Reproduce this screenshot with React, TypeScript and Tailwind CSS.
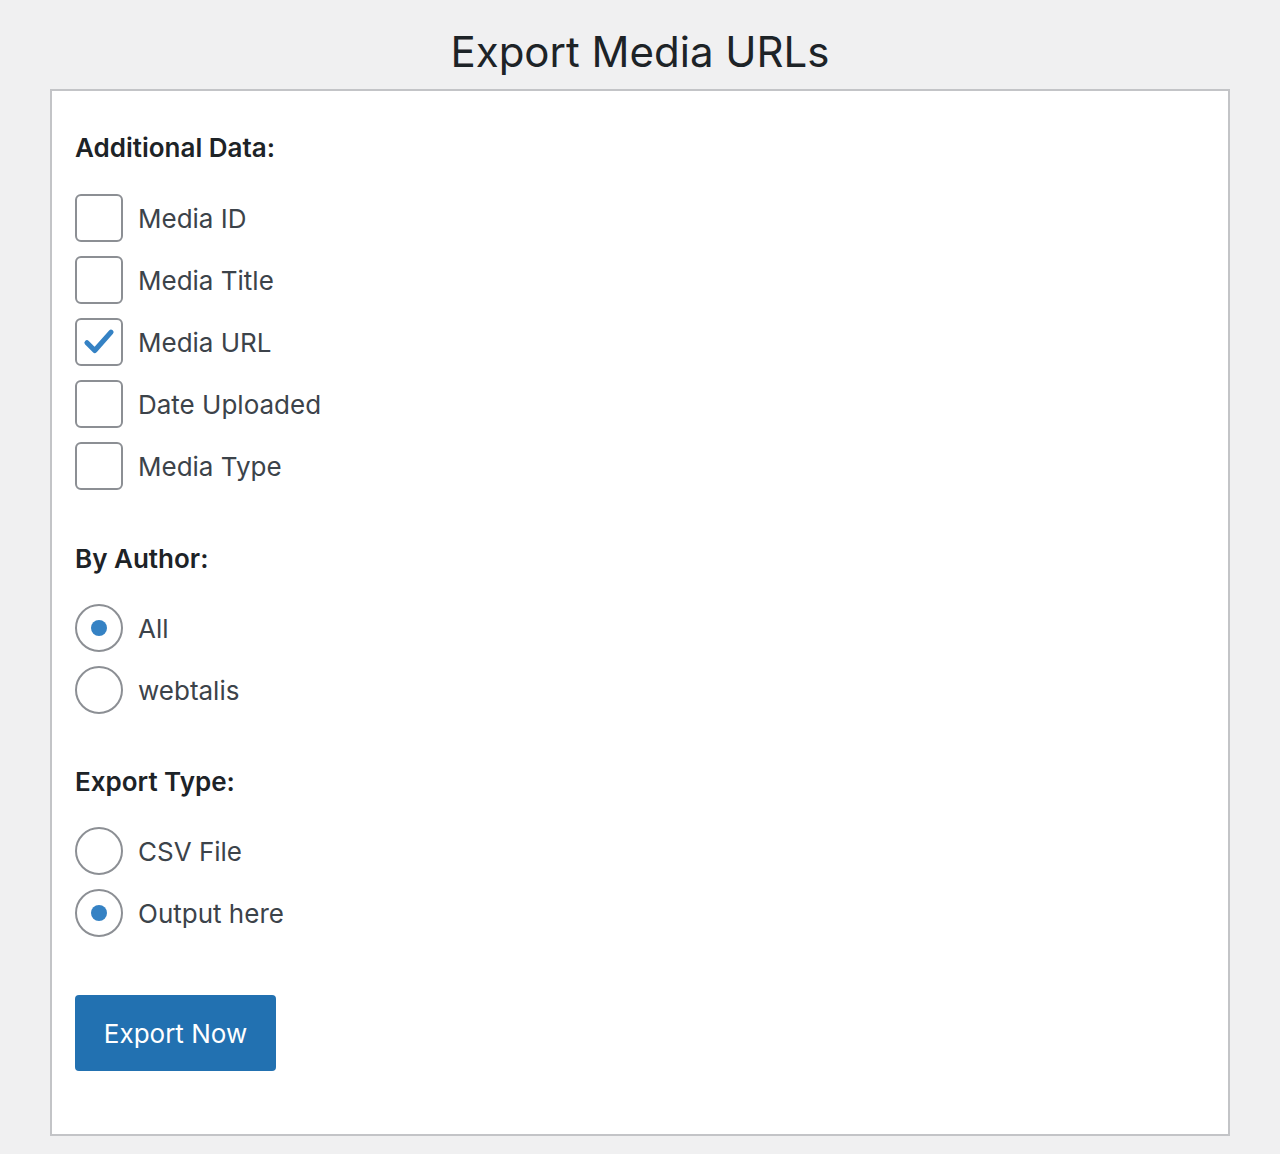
import React from "react";

const F = { fontFamily: "Inter, 'Noto Sans', sans-serif" };

function Check({ checked, label }: { checked?: boolean; label: string }) {
  return (
    <div className="flex items-center h-[48px]">
      <div className="w-[48px] h-[48px] rounded-[6px] border-2 border-[#8c8f94] bg-white flex items-center justify-center">
        {checked && (
          <svg width="34" height="34" viewBox="0 0 24 24">
            <path d="M3.5 12.5 L9 18 L20.5 5" fill="none" stroke="#3582c4" strokeWidth="3.6" strokeLinecap="round" strokeLinejoin="round" />
          </svg>
        )}
      </div>
      <span className="ml-[15px] text-[26px] text-[#3c434a]">{label}</span>
    </div>
  );
}

function Radio({ checked, label }: { checked?: boolean; label: string }) {
  return (
    <div className="flex items-center h-[48px]">
      <div className="w-[48px] h-[48px] rounded-full border-2 border-[#8c8f94] bg-white flex items-center justify-center">
        {checked && <div className="w-[16px] h-[16px] rounded-full bg-[#3582c4]" />}
      </div>
      <span className="ml-[15px] text-[26px] text-[#3c434a]">{label}</span>
    </div>
  );
}

export default function App() {
  return (
    <div style={F} className="bg-[#f0f0f1] min-h-[1154px] px-[50px] pt-[24px]">
      <h1 className="text-center text-[42px] leading-[56px] text-[#1d2327] mb-[9px]">Export Media URLs</h1>
      <div className="w-[1180px] h-[1047px] bg-white border-2 border-[#c3c4c7] pl-[23px] pt-[41px]">
        <h2 className="text-[26px] font-semibold leading-[32px] text-[#1d2327]">Additional Data:</h2>
        <div className="flex flex-col gap-[14px] mt-[30px]">
          <Check label="Media ID" />
          <Check label="Media Title" />
          <Check checked label="Media URL" />
          <Check label="Date Uploaded" />
          <Check label="Media Type" />
        </div>
        <h2 className="text-[26px] font-semibold leading-[32px] text-[#1d2327] mt-[53px]">By Author:</h2>
        <div className="flex flex-col gap-[14px] mt-[29px]">
          <Radio checked label="All" />
          <Radio label="webtalis" />
        </div>
        <h2 className="text-[26px] font-semibold leading-[32px] text-[#1d2327] mt-[52px]">Export Type:</h2>
        <div className="flex flex-col gap-[14px] mt-[29px]">
          <Radio label="CSV File" />
          <Radio checked label="Output here" />
        </div>
        <button className="mt-[58px] w-[201px] h-[76px] rounded-[4px] bg-[#2271b1] text-white text-[26px]">Export Now</button>
      </div>
    </div>
  );
}
